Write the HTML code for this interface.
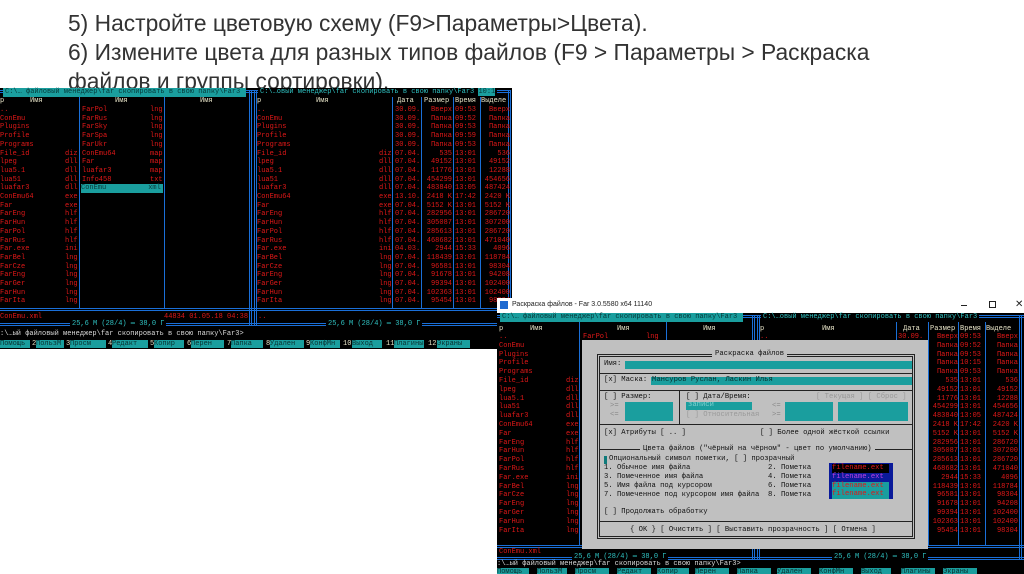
<!DOCTYPE html>
<html><head><meta charset="utf-8">
<style>
*{margin:0;padding:0;box-sizing:border-box}
body{width:1024px;height:574px;background:#fff;position:relative;overflow:hidden;font-family:"Liberation Sans","DejaVu Sans",sans-serif}
.h{position:absolute;left:68px;font-size:22.8px;color:#333;white-space:nowrap;line-height:29px}
.a{position:absolute}
.t{position:absolute;white-space:pre;font:7px/8.7px "Liberation Mono","DejaVu Sans Mono",monospace}
.r{color:#e01818}
.c{color:#2fc0c0}
.w{color:#e8e4c8}
.vb{position:absolute;width:1px;background:#1a6fd8}
.hb{position:absolute;height:1px;background:#1a6fd8}
.dv{position:absolute;width:3px;border-left:1px solid #1a6fd8;border-right:1px solid #1a6fd8}
.dh{position:absolute;height:3px;border-top:1px solid #1a6fd8;border-bottom:1px solid #1a6fd8}
.teal{background:#1a9e9e}
.k{position:absolute;top:0;height:8px;background:#1a9e9e;color:#0a3030;font:7px/8px "Liberation Mono",monospace;white-space:pre}
.d{position:absolute;white-space:pre;font:7.2px/9px "Liberation Mono","DejaVu Sans Mono",monospace;color:#111}
.f{position:absolute;background:#1a9e9e}
.bl{position:absolute;height:1px;background:#222}
</style></head><body>
<div class="h" style="top:9px">5) Настройте цветовую схему (F9&gt;Параметры&gt;Цвета).</div>
<div class="h" style="top:38px">6) Измените цвета для разных типов файлов (F9 &gt; Параметры &gt; Раскраска</div>
<div class="h" style="top:67px">файлов и группы сортировки).</div>

<!-- SCREEN 1 -->
<div class="a" style="left:0;top:88px;width:512px;height:261px;background:#000"></div>
<div class="dh" style="left:0;top:90px;width:511px"></div>
<div class="dh" style="left:0;top:308px;width:511px"></div>
<div class="dh" style="left:0;top:323px;width:511px"></div>
<div class="dv" style="left:249px;top:90px;height:236px"></div>
<div class="dv" style="left:254px;top:90px;height:236px"></div>
<div class="dv" style="left:508px;top:90px;height:236px"></div>
<div class="vb" style="left:79px;top:96px;height:213px"></div>
<div class="vb" style="left:164px;top:96px;height:213px"></div>
<div class="vb" style="left:392px;top:96px;height:213px"></div>
<div class="vb" style="left:421px;top:96px;height:213px"></div>
<div class="vb" style="left:453px;top:96px;height:213px"></div>
<div class="vb" style="left:480px;top:96px;height:213px"></div>
<div class="t teal" style="left:3px;top:88px;color:#063a3a;padding:0 2px">C:\… файловый менеджер\far скопировать в свою папку\Far3 </div>
<div class="t c" style="left:258px;top:88px;background:#000;padding:0 2px">C:\…овый менеджер\far скопировать в свою папку\Far3 <span style="background:#1a9e9e;color:#063a3a">10:1</span></div>
<div class="t w" style="left:0;top:97px">р</div>
<div class="t w" style="left:30px;top:97px">Имя</div>
<div class="t w" style="left:115px;top:97px">Имя</div>
<div class="t w" style="left:200px;top:97px">Имя</div>
<div class="t w" style="left:257px;top:97px">р</div>
<div class="t w" style="left:316px;top:97px">Имя</div>
<div class="t w" style="left:397px;top:97px">Дата</div>
<div class="t w" style="left:424px;top:97px">Размер</div>
<div class="t w" style="left:455px;top:97px">Время</div>
<div class="t w" style="left:481px;top:97px">Выделе</div>
<div class="t r" style="left:0;top:106px">..
ConEmu
Plugins
Profile
Programs
File_id
lpeg
lua5.1
lua51
luafar3
ConEmu64
Far
FarEng
FarHun
FarPol
FarRus
Far.exe
FarBel
FarCze
FarEng
FarGer
FarHun
FarIta</div>
<div class="t r" style="left:65px;top:106px">




diz
dll
dll
dll
dll
exe
exe
hlf
hlf
hlf
hlf
ini
lng
lng
lng
lng
lng
lng</div>
<div class="t r" style="left:82px;top:106px">FarPol
FarRus
FarSky
FarSpa
FarUkr
ConEmu64
Far
luafar3
Info458</div>
<div class="t r" style="left:150px;top:106px">lng
lng
lng
lng
lng
map
map
map
txt</div>
<div class="t teal" style="left:81px;top:184.3px;width:82px;color:#0a3a3a">ConEmu          xml</div>
<div class="t r" style="left:257px;top:106px">..
ConEmu
Plugins
Profile
Programs
File_id
lpeg
lua5.1
lua51
luafar3
ConEmu64
Far
FarEng
FarHun
FarPol
FarRus
Far.exe
FarBel
FarCze
FarEng
FarGer
FarHun
FarIta</div>
<div class="t r" style="left:379px;top:106px">




diz
dll
dll
dll
dll
exe
exe
hlf
hlf
hlf
hlf
ini
lng
lng
lng
lng
lng
lng</div>
<div class="t r" style="left:395px;top:106px">30.09.
30.09.
30.09.
30.09.
30.09.
07.04.
07.04.
07.04.
07.04.
07.04.
13.10.
07.04.
07.04.
07.04.
07.04.
07.04.
04.03.
07.04.
07.04.
07.04.
07.04.
07.04.
07.04.</div>
<div class="t r" style="left:423px;top:106px;text-align:right;width:29px"> Вверх
 Папка
 Папка
 Папка
 Папка
   535
 49152
 11776
454299
483840
2418 K
5152 K
282956
305087
285613
468682
  2944
118439
 96581
 91678
 99394
102363
 95454</div>
<div class="t r" style="left:455px;top:106px">09:53
09:52
09:53
09:59
09:53
13:01
13:01
13:01
13:01
13:05
17:42
13:01
13:01
13:01
13:01
13:01
15:33
13:01
13:01
13:01
13:01
13:01
13:01</div>
<div class="t r" style="left:481px;top:106px;text-align:right;width:29px"> Вверх
 Папка
 Папка
 Папка
 Папка
   536
 49152
 12288
454656
487424
2420 K
5152 K
286720
307200
286720
471040
  4096
118784
 98304
 94208
102400
102400
 98304</div>
<div class="t r" style="left:0;top:313px">ConEmu.xml</div>
<div class="t r" style="left:164px;top:313px">44834 01.05.18 04:38</div>
<div class="t r" style="left:258px;top:313px">..</div>
<div class="t c" style="left:70px;top:320px;background:#000;padding:0 2px">25,6 M (28/4) ═ 38,0 Г</div>
<div class="t c" style="left:326px;top:320px;background:#000;padding:0 2px">25,6 M (28/4) ═ 38,0 Г</div>
<div class="t" style="left:0;top:330px;color:#d8d8d8">:\…ый файловый менеджер\far скопировать в свою папку\Far3&gt;</div>
<div class="a" style="left:0;top:340px;width:512px;height:9px">
<div class="k" style="left:0;width:30px">Помощь</div><div class="t w" style="left:32px;top:0">2</div><div class="k" style="left:36px;width:28px">ПользМ</div>
<div class="t w" style="left:66px;top:0">3</div><div class="k" style="left:70px;width:36px">Просм</div><div class="t w" style="left:108px;top:0">4</div><div class="k" style="left:112px;width:36px">Редакт</div>
<div class="t w" style="left:150px;top:0">5</div><div class="k" style="left:154px;width:30px">Копир</div><div class="t w" style="left:187px;top:0">6</div><div class="k" style="left:191px;width:33px">Перен</div>
<div class="t w" style="left:227px;top:0">7</div><div class="k" style="left:231px;width:32px">Папка</div><div class="t w" style="left:266px;top:0">8</div><div class="k" style="left:270px;width:34px">Удален</div>
<div class="t w" style="left:306px;top:0">9</div><div class="k" style="left:310px;width:30px">КонфМн</div><div class="t w" style="left:343px;top:0">10</div><div class="k" style="left:352px;width:30px">Выход</div>
<div class="t w" style="left:386px;top:0">11</div><div class="k" style="left:394px;width:30px">Плагины</div><div class="t w" style="left:428px;top:0">12</div><div class="k" style="left:437px;width:33px">Экраны</div>
</div>

<!-- SCREEN 2 window -->
<div class="a" style="left:497px;top:298px;width:527px;height:276px;background:#000"></div>
<div class="a" style="left:497px;top:298px;width:527px;height:15px;background:#fff"></div>
<div class="a" style="left:500px;top:301px;width:8px;height:8px;background:#1f6ad0"></div>
<div class="a" style="left:512px;top:300px;font-size:7px;line-height:10px;color:#222;white-space:nowrap">Раскраска файлов - Far 3.0.5580 x64 11140</div>
<div class="a" style="left:961px;top:301px;width:6px;height:1px;background:#222;margin-top:4px"></div>
<div class="a" style="left:989px;top:301px;width:7px;height:7px;border:1px solid #222"></div>
<div class="a" style="left:1015px;top:298px;font-size:10px;line-height:13px;color:#222">✕</div>

<div class="dh" style="left:497px;top:315px;width:527px"></div>
<div class="dh" style="left:497px;top:545px;width:527px"></div>
<div class="dh" style="left:497px;top:557px;width:527px"></div>
<div class="dv" style="left:752px;top:315px;height:245px"></div>
<div class="dv" style="left:757px;top:315px;height:245px"></div>
<div class="dv" style="left:1019px;top:315px;height:245px"></div>
<div class="vb" style="left:579px;top:322px;height:224px"></div>
<div class="vb" style="left:666px;top:322px;height:224px"></div>
<div class="vb" style="left:896px;top:322px;height:224px"></div>
<div class="vb" style="left:928px;top:322px;height:224px"></div>
<div class="vb" style="left:958px;top:322px;height:224px"></div>
<div class="vb" style="left:985px;top:322px;height:224px"></div>
<div class="t teal" style="left:500px;top:313px;color:#063a3a;padding:0 2px">C:\… файловый менеджер\far скопировать в свою папку\Far3 </div>
<div class="t c" style="left:761px;top:313px;background:#000;padding:0 2px">C:\…овый менеджер\far скопировать в свою папку\Far3</div>
<div class="t w" style="left:499px;top:325px">р</div>
<div class="t w" style="left:530px;top:325px">Имя</div>
<div class="t w" style="left:617px;top:325px">Имя</div>
<div class="t w" style="left:703px;top:325px">Имя</div>
<div class="t w" style="left:760px;top:325px">р</div>
<div class="t w" style="left:822px;top:325px">Имя</div>
<div class="t w" style="left:903px;top:325px">Дата</div>
<div class="t w" style="left:930px;top:325px">Размер</div>
<div class="t w" style="left:960px;top:325px">Время</div>
<div class="t w" style="left:986px;top:325px">Выделе</div>
<div class="t r" style="left:499px;top:333px;line-height:8.8px">..
ConEmu
Plugins
Profile
Programs
File_id
lpeg
lua5.1
lua51
luafar3
ConEmu64
Far
FarEng
FarHun
FarPol
FarRus
Far.exe
FarBel
FarCze
FarEng
FarGer
FarHun
FarIta</div>
<div class="t r" style="left:566px;top:333px;line-height:8.8px">




diz
dll
dll
dll
dll
exe
exe
hlf
hlf
hlf
hlf
ini
lng
lng
lng
lng
lng
lng</div>
<div class="t r" style="left:583px;top:333px">FarPol         lng</div>
<div class="t r" style="left:760px;top:333px">..</div>
<div class="t r" style="left:898px;top:333px">30.09.</div>
<div class="t r" style="left:929px;top:333px;line-height:8.8px;text-align:right;width:29px"> Вверх
 Папка
 Папка
 Папка
 Папка
   535
 49152
 11776
454299
483840
2418 K
5152 K
282956
305087
285613
468682
  2944
118439
 96581
 91678
 99394
102363
 95454</div>
<div class="t r" style="left:960px;top:333px;line-height:8.8px">09:53
09:52
09:53
10:15
09:53
13:01
13:01
13:01
13:01
13:05
17:42
13:01
13:01
13:01
13:01
13:01
15:33
13:01
13:01
13:01
13:01
13:01
13:01</div>
<div class="t r" style="left:986px;top:333px;line-height:8.8px;text-align:right;width:32px"> Вверх
 Папка
 Папка
 Папка
 Папка
   536
 49152
 12288
454656
487424
2420 K
5152 K
286720
307200
286720
471040
  4096
118784
 98304
 94208
102400
102400
 98304</div>
<div class="t r" style="left:499px;top:548px">ConEmu.xml</div>
<div class="t c" style="left:572px;top:553px;background:#000;padding:0 2px">25,6 M (28/4) ═ 38,0 Г</div>
<div class="t c" style="left:832px;top:553px;background:#000;padding:0 2px">25,6 M (28/4) ═ 38,0 Г</div>
<div class="t" style="left:497px;top:560px;color:#d8d8d8">:\…ый файловый менеджер\far скопировать в свою папку\Far3&gt;</div>
<div class="a" style="left:497px;top:568px;width:527px;height:6px;overflow:hidden">
<div class="k" style="left:0;width:32px">Помощь</div><div class="k" style="left:40px;width:30px">ПользМ</div><div class="k" style="left:78px;width:34px">Просм</div><div class="k" style="left:120px;width:34px">Редакт</div><div class="k" style="left:160px;width:32px">Копир</div><div class="k" style="left:198px;width:34px">Перен</div><div class="k" style="left:240px;width:34px">Папка</div><div class="k" style="left:280px;width:34px">Удален</div><div class="k" style="left:322px;width:34px">КонфМн</div><div class="k" style="left:364px;width:30px">Выход</div><div class="k" style="left:404px;width:34px">Плагины</div><div class="k" style="left:446px;width:34px">Экраны</div>
</div>

<!-- DIALOG -->
<div class="a" style="left:582px;top:340px;width:346px;height:209px;background:#c0c0c0"></div>
<div class="a" style="left:597px;top:354px;width:318px;height:185px;border:3px double #222"></div>
<div class="d" style="left:712px;top:350px;background:#c0c0c0;padding:0 3px">Раскраска файлов</div>
<div class="d" style="left:604px;top:360px">Имя:</div>
<div class="f" style="left:625px;top:361px;width:287px;height:8px"></div>
<div class="bl" style="left:600px;top:373px;width:312px"></div>
<div class="d" style="left:604px;top:376px">[x] Маска:</div>
<div class="f" style="left:651px;top:377px;width:261px;height:8px"></div>
<div class="d" style="left:652px;top:376px;color:#083030">Мансуров Руслан, Ласкин Илья</div>
<div class="bl" style="left:600px;top:390px;width:312px"></div>
<div class="d" style="left:604px;top:393px">[ ] Размер:</div>
<div class="d" style="left:686px;top:393px">[ ] Дата/Время:</div>
<div class="d" style="left:816px;top:393px;color:#999">[ Текущая ] [ Сброс ]</div>
<div class="d" style="left:610px;top:402px;color:#888">&gt;=
&lt;=</div>
<div class="f" style="left:625px;top:402px;width:48px;height:19px"></div>
<div class="a" style="left:679px;top:390px;width:1px;height:34px;background:#222"></div>
<div class="f" style="left:686px;top:402px;width:66px;height:8px"></div>
<div class="d" style="left:688px;top:401px;color:#7fd0d0">записи</div>
<div class="d" style="left:772px;top:402px;color:#888">&lt;=
&gt;=</div>
<div class="f" style="left:785px;top:402px;width:48px;height:19px"></div>
<div class="f" style="left:838px;top:402px;width:70px;height:19px"></div>
<div class="d" style="left:686px;top:411px;color:#999">[ ] Относительная</div>
<div class="bl" style="left:600px;top:424px;width:312px"></div>
<div class="d" style="left:604px;top:429px">[x] Атрибуты [ .. ]</div>
<div class="d" style="left:760px;top:429px">[ ] Более одной жёсткой ссылки</div>
<div class="bl" style="left:600px;top:449px;width:312px"></div>
<div class="d" style="left:640px;top:445px;background:#c0c0c0;padding:0 3px">Цвета файлов ("чёрный на чёрном" - цвет по умолчанию)</div>
<div class="f" style="left:604px;top:456px;width:3px;height:8px;background:#0e7a7a"></div>
<div class="d" style="left:609px;top:455px">Опциональный символ пометки, [ ] прозрачный</div>
<div class="d" style="left:604px;top:464px">1. Обычное имя файла
3. Помеченное имя файла
5. Имя файла под курсором
7. Помеченное под курсором имя файла</div>
<div class="d" style="left:768px;top:464px">2. Пометка
4. Пометка
6. Пометка
8. Пометка</div>
<div class="a" style="left:829px;top:463px;width:64px;height:36px;background:#0a1a9a"></div>
<div class="d" style="left:832px;top:464px;background:#000;color:#e01818;width:57px">filename.ext</div>
<div class="d" style="left:832px;top:473px;color:#c040e0">filename.ext</div>
<div class="d" style="left:832px;top:482px;background:#1a9e9e;color:#e01818;width:57px">filename.ext</div>
<div class="d" style="left:832px;top:490px;background:#1a9e9e;color:#e01818;width:57px">filename.ext</div>
<div class="d" style="left:604px;top:508px">[ ] Продолжать обработку</div>
<div class="bl" style="left:600px;top:521px;width:312px"></div>
<div class="d" style="left:630px;top:526px">{ OK } [ Очистить ] [ Выставить прозрачность ] [ Отмена ]</div>
</body></html>
